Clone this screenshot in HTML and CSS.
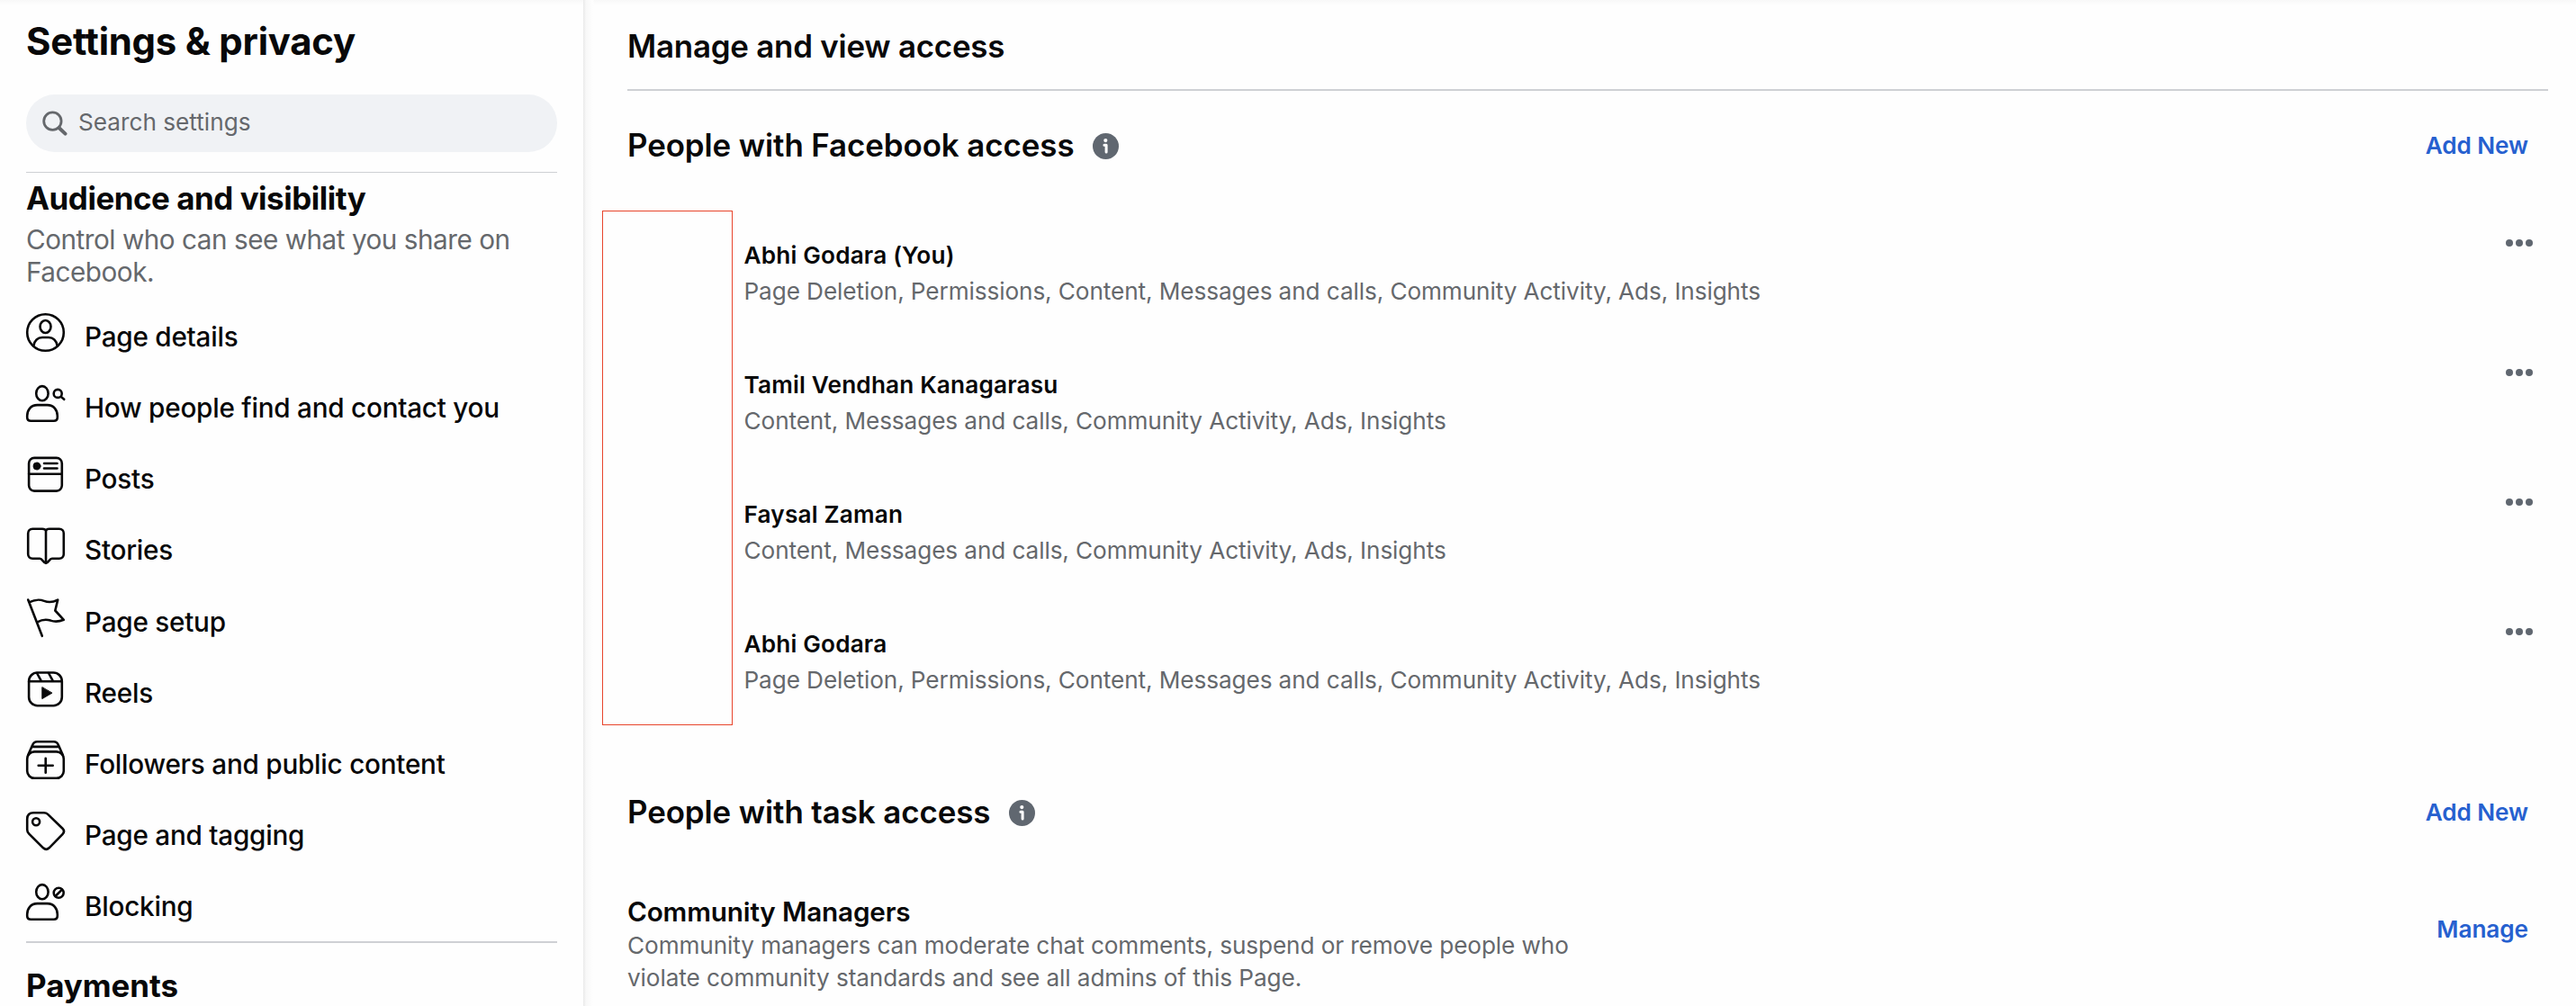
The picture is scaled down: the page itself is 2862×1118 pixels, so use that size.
FILE: index.html
```
<!DOCTYPE html>
<html lang="en">
<head>
<meta charset="utf-8">
<title>Settings &amp; privacy</title>
<link rel="stylesheet" href="styles.css">
</head>
<body>
<div class="app">
  <aside class="sidebar">
    <h1 class="sidebar-title">Settings &amp; privacy</h1>
    <div class="search">
      <svg class="search-icon" width="28" height="28" viewBox="0 0 28 28"><circle cx="11.4" cy="11.6" r="9.7" fill="none" stroke="currentColor" stroke-width="2.8"/><path d="M18.5 19l7 6.6" stroke="currentColor" stroke-width="4" stroke-linecap="round"/></svg>
      <span class="search-text">Search settings</span>
    </div>
    <hr class="rule-thin">
    <h2 class="group-title">Audience and visibility</h2>
    <p class="group-text">Control who can see what you share on Facebook.</p>
    <nav class="nav">
      <a class="nav-item">
        <svg class="nav-icon" viewBox="0 0 43 43"><circle cx="21.5" cy="21.5" r="20.3"/><ellipse cx="21.5" cy="15" rx="6" ry="7"/><path d="M8.2 36.6C9.5 30 13 27 18 27h7c5 0 8.5 3 9.8 9.6"/></svg>
        <span class="nav-label">Page details</span>
      </a>
      <a class="nav-item">
        <svg class="nav-icon" viewBox="0 0 43 43"><ellipse cx="17.9" cy="10.2" rx="6.7" ry="8.1"/><path d="M12.5 23.1h11C31 23.1 34.8 29 34.8 35v1.7c0 2.7-1.3 4-4 4H5.2c-2.7 0-4-1.3-4-4V35C1.2 29 5 23.1 12.5 23.1z"/><circle cx="35.2" cy="10.4" r="4.5"/><path d="M38.6 13.8l3.600 3"/></svg>
        <span class="nav-label">How people find and contact you</span>
      </a>
      <a class="nav-item">
        <svg class="nav-icon" viewBox="0 0 43 43"><rect x="3.1" y="2.9" width="36.7" height="36.7" rx="6"/><path d="M3.1 20.7h36.7M20 9h14.5M20 14.5h14.5"/><circle class="solid" cx="12" cy="12" r="4"/></svg>
        <span class="nav-label">Posts</span>
      </a>
      <a class="nav-item">
        <svg class="nav-icon" viewBox="0 0 43 43"><path d="M22 5.5C22 3.5 20 2.8 18 2.8H7.2c-3 0-5 2-5 5v22.9c0 3 2 5 5 5h8c3 0 3.8 5.3 6.8 5.3s3.8-5.3 6.8-5.3h8c3 0 5-2 5-5V7.8c0-3-2-5-5-5H26c-2 0-4 .7-4 2.7v35"/></svg>
        <span class="nav-label">Stories</span>
      </a>
      <a class="nav-item">
        <svg class="nav-icon" viewBox="0 0 43 43"><path d="M2.2 1.5L17.8 41.8M3.3 4.4C10.5 1 14.5 .8 20 2.9c5.2 2 9.800 1.600 15.200-1.300L32.3 13.5 41.8 23.8c-5.800 2.400-9.700 2.600-14.700 .8-4.800-1.500-9.300-1.200-14.600 1.800"/></svg>
        <span class="nav-label">Page setup</span>
      </a>
      <a class="nav-item">
        <svg class="nav-icon" viewBox="0 0 43 43"><rect x="3.1" y="3.5" width="36.7" height="36.7" rx="9.5"/><path d="M3.1 13.2h36.7M12 4l5 9.2M25 4l5 9.2"/><path class="solid" d="M17.8 20v12.6l10.8-6.3z"/></svg>
        <span class="nav-label">Reels</span>
      </a>
      <a class="nav-item">
        <svg class="nav-icon" viewBox="0 0 43 43"><rect x="1.2" y="12.4" width="40.6" height="29.4" rx="8"/><path d="M2.2 16L7 5.2C8 2.6 9.5 1.3 12.3 1.3h18.4c2.8 0 4.3 1.3 5.3 3.9L40.8 16M6.2 6.9h30.6M21.7 19.8v16M13.7 27.8h16"/></svg>
        <span class="nav-label">Followers and public content</span>
      </a>
      <a class="nav-item">
        <svg class="nav-icon" viewBox="0 0 43 43"><path d="M1.2 8.2c0-4.500 2.500-7 7-7h11.500c1.800 0 3 .4 4.400 1.700L40.500 18.700c1.900 2 1.900 4.400 0 6.400L25.600 40.300c-2 1.900-4.600 1.900-6.600 0L3.200 24.600C1.800 23.200 1.200 22 1.200 20z"/><circle cx="11.1" cy="11.2" r="4"/></svg>
        <span class="nav-label">Page and tagging</span>
      </a>
      <a class="nav-item">
        <svg class="nav-icon" viewBox="0 0 43 43"><ellipse cx="17.9" cy="10.2" rx="6.7" ry="8.1"/><path d="M12.5 23.1h11C31 23.1 34.8 29 34.8 35v1.7c0 2.7-1.3 4-4 4H5.2c-2.7 0-4-1.3-4-4V35C1.2 29 5 23.1 12.5 23.1z"/><circle cx="36.2" cy="11.3" r="5.5"/><path d="M32.5 15l7.4-7.4"/></svg>
        <span class="nav-label">Blocking</span>
      </a>
    </nav>
    <hr class="rule">
    <h2 class="group-title payments">Payments</h2>
  </aside>

  <main class="content">
    <h2 class="page-title">Manage and view access</h2>
    <hr class="rule">

    <div class="section-head">
      <h2 class="section-title">People with Facebook access</h2>
      <svg class="info" viewBox="0 0 29 29"><circle class="info-disc" cx="14.5" cy="14.5" r="14.5"/><circle class="info-mark" cx="14.3" cy="8.1" r="2.1"/><path class="info-stem" d="M12.9 13.3h2.2v7.6"/></svg>
      <a class="link">Add New</a>
    </div>

    <div class="people">
      <div class="highlight"></div>
      <div class="person">
        <div class="person-text"><div class="name">Abhi Godara (You)</div><div class="detail">Page Deletion, Permissions, Content, Messages and calls, Community Activity, Ads, Insights</div></div>
        <div class="more"><i></i><i></i><i></i></div>
      </div>
      <div class="person">
        <div class="person-text"><div class="name">Tamil Vendhan Kanagarasu</div><div class="detail">Content, Messages and calls, Community Activity, Ads, Insights</div></div>
        <div class="more"><i></i><i></i><i></i></div>
      </div>
      <div class="person">
        <div class="person-text"><div class="name">Faysal Zaman</div><div class="detail">Content, Messages and calls, Community Activity, Ads, Insights</div></div>
        <div class="more"><i></i><i></i><i></i></div>
      </div>
      <div class="person">
        <div class="person-text"><div class="name">Abhi Godara</div><div class="detail">Page Deletion, Permissions, Content, Messages and calls, Community Activity, Ads, Insights</div></div>
        <div class="more"><i></i><i></i><i></i></div>
      </div>
    </div>

    <div class="section-head task-head">
      <h2 class="section-title">People with task access</h2>
      <svg class="info" viewBox="0 0 29 29"><circle class="info-disc" cx="14.5" cy="14.5" r="14.5"/><circle class="info-mark" cx="14.3" cy="8.1" r="2.1"/><path class="info-stem" d="M12.9 13.3h2.2v7.6"/></svg>
      <a class="link">Add New</a>
    </div>

    <div class="task">
      <div class="task-text">
        <h3 class="task-title">Community Managers</h3>
        <p class="detail">Community managers can moderate chat comments, suspend or remove people who<br>violate community standards and see all admins of this Page.</p>
      </div>
      <a class="link">Manage</a>
    </div>
  </main>
</div>
</body>
</html>
```
FILE: styles.css
```
* { box-sizing: border-box; }

body {
  margin: 0;
  font-family: Inter, "Liberation Sans", sans-serif;
  color: #080809;
  background: #fefefe;
}

h1, h2, h3, p { margin: 0; }

.app {
  display: flex;
  height: 1118px;
  overflow: hidden;
  background: linear-gradient(#f8f8f8, #fefefe 6px);
}

.sidebar {
  width: 648px;
  flex: none;
  padding: 21px 29px 0;
}

.sidebar-title {
  font-size: 41.9px;
  line-height: 50px;
  font-weight: 700;
  letter-spacing: -0.0056em;
}

.search {
  display: flex;
  align-items: center;
  gap: 12px;
  height: 64px;
  margin-top: 34px;
  padding-left: 18px;
  border-radius: 32px;
  background: #f0f2f5;
  color: #65686c;
}

.search-text {
  padding-bottom: 3px;
  font-size: 26.2px;
  line-height: 36px;
}

.rule-thin, .rule {
  border: 0;
  margin: 0;
  height: 2px;
  background: #ced0d4;
}

.rule-thin {
  height: 1px;
  margin-top: 22px;
}

.group-title {
  margin-top: 8px;
  font-size: 34.9px;
  line-height: 40px;
  font-weight: 700;
  letter-spacing: -0.013em;
}

.payments {
  margin-top: 27px;
  letter-spacing: -0.001em;
}

.group-text {
  margin-top: 8px;
  font-size: 29.7px;
  line-height: 36px;
  letter-spacing: -0.016em;
  color: #65686c;
}

.nav { padding-top: 14px; }

.nav-item {
  display: flex;
  align-items: flex-start;
  gap: 22px;
  height: 79.13px;
  padding-top: 14px;
}

.nav-icon {
  width: 43px;
  height: 43px;
  overflow: visible;
  fill: none;
  stroke: #080809;
  stroke-width: 2.6px;
  stroke-linecap: round;
  stroke-linejoin: round;
}

.nav-icon .solid {
  fill: #080809;
  stroke-width: 1px;
}

.nav-label {
  margin-top: 8px;
  font-size: 29.7px;
  line-height: 36px;
  font-weight: 500;
  letter-spacing: -0.0082em;
}

.content {
  flex: 1;
  padding: 31px 31px 0 49px;
  background: linear-gradient(90deg, #e9e9e9, #f8f8f8 3px, #fefefe 11px, transparent 12px);
}

.page-title {
  font-size: 34.9px;
  line-height: 40px;
  font-weight: 600;
  letter-spacing: -0.0065em;
}

.content .rule { margin-top: 28px; }

.section-head {
  display: flex;
  align-items: center;
  margin-top: 40px;
  padding-right: 22px;
}

.section-title {
  font-size: 34.9px;
  line-height: 40px;
  font-weight: 600;
  letter-spacing: -0.0025em;
}

.info {
  width: 29px;
  height: 29px;
  margin: 2px 0 0 21px;
}

.info-disc { fill: #606770; }
.info-mark { fill: #fff; }

.info-stem {
  fill: none;
  stroke: #fff;
  stroke-width: 3px;
  stroke-linecap: round;
  stroke-linejoin: round;
}

.link {
  margin-left: auto;
  font-size: 26.2px;
  line-height: 36px;
  font-weight: 600;
  letter-spacing: -0.003em;
  color: #2660cf;
}

.section-head .link { padding-top: 2px; }

.people {
  position: relative;
  margin-top: 53px;
}

/* Outline over the avatar column */
.highlight {
  position: absolute;
  left: -28px;
  top: 0;
  width: 145px;
  height: 572px;
  border: 1px solid #e8452c;
}

.person {
  display: flex;
  justify-content: space-between;
  height: 144px;
  padding: 32px 17px 0 129.5px;
}

.name {
  font-size: 26.2px;
  line-height: 36px;
  font-weight: 600;
  letter-spacing: 0.0065em;
}

.detail {
  font-size: 26.2px;
  line-height: 36px;
  letter-spacing: -0.0039em;
  color: #65686c;
}

.person .detail { margin-top: 4px; }

.more {
  display: flex;
  gap: 3px;
}

.more i {
  width: 8px;
  height: 8px;
  border-radius: 50%;
  background: #606770;
}

.task-head { margin-top: 72px; }

.task {
  display: flex;
  justify-content: space-between;
  align-items: center;
  margin-top: 73px;
  padding-right: 22px;
}

.task-title {
  font-size: 29.7px;
  line-height: 36px;
  font-weight: 600;
  letter-spacing: -0.0055em;
}

.task .detail { margin-top: 2px; }

.task .link { margin-bottom: 35px; }
```
